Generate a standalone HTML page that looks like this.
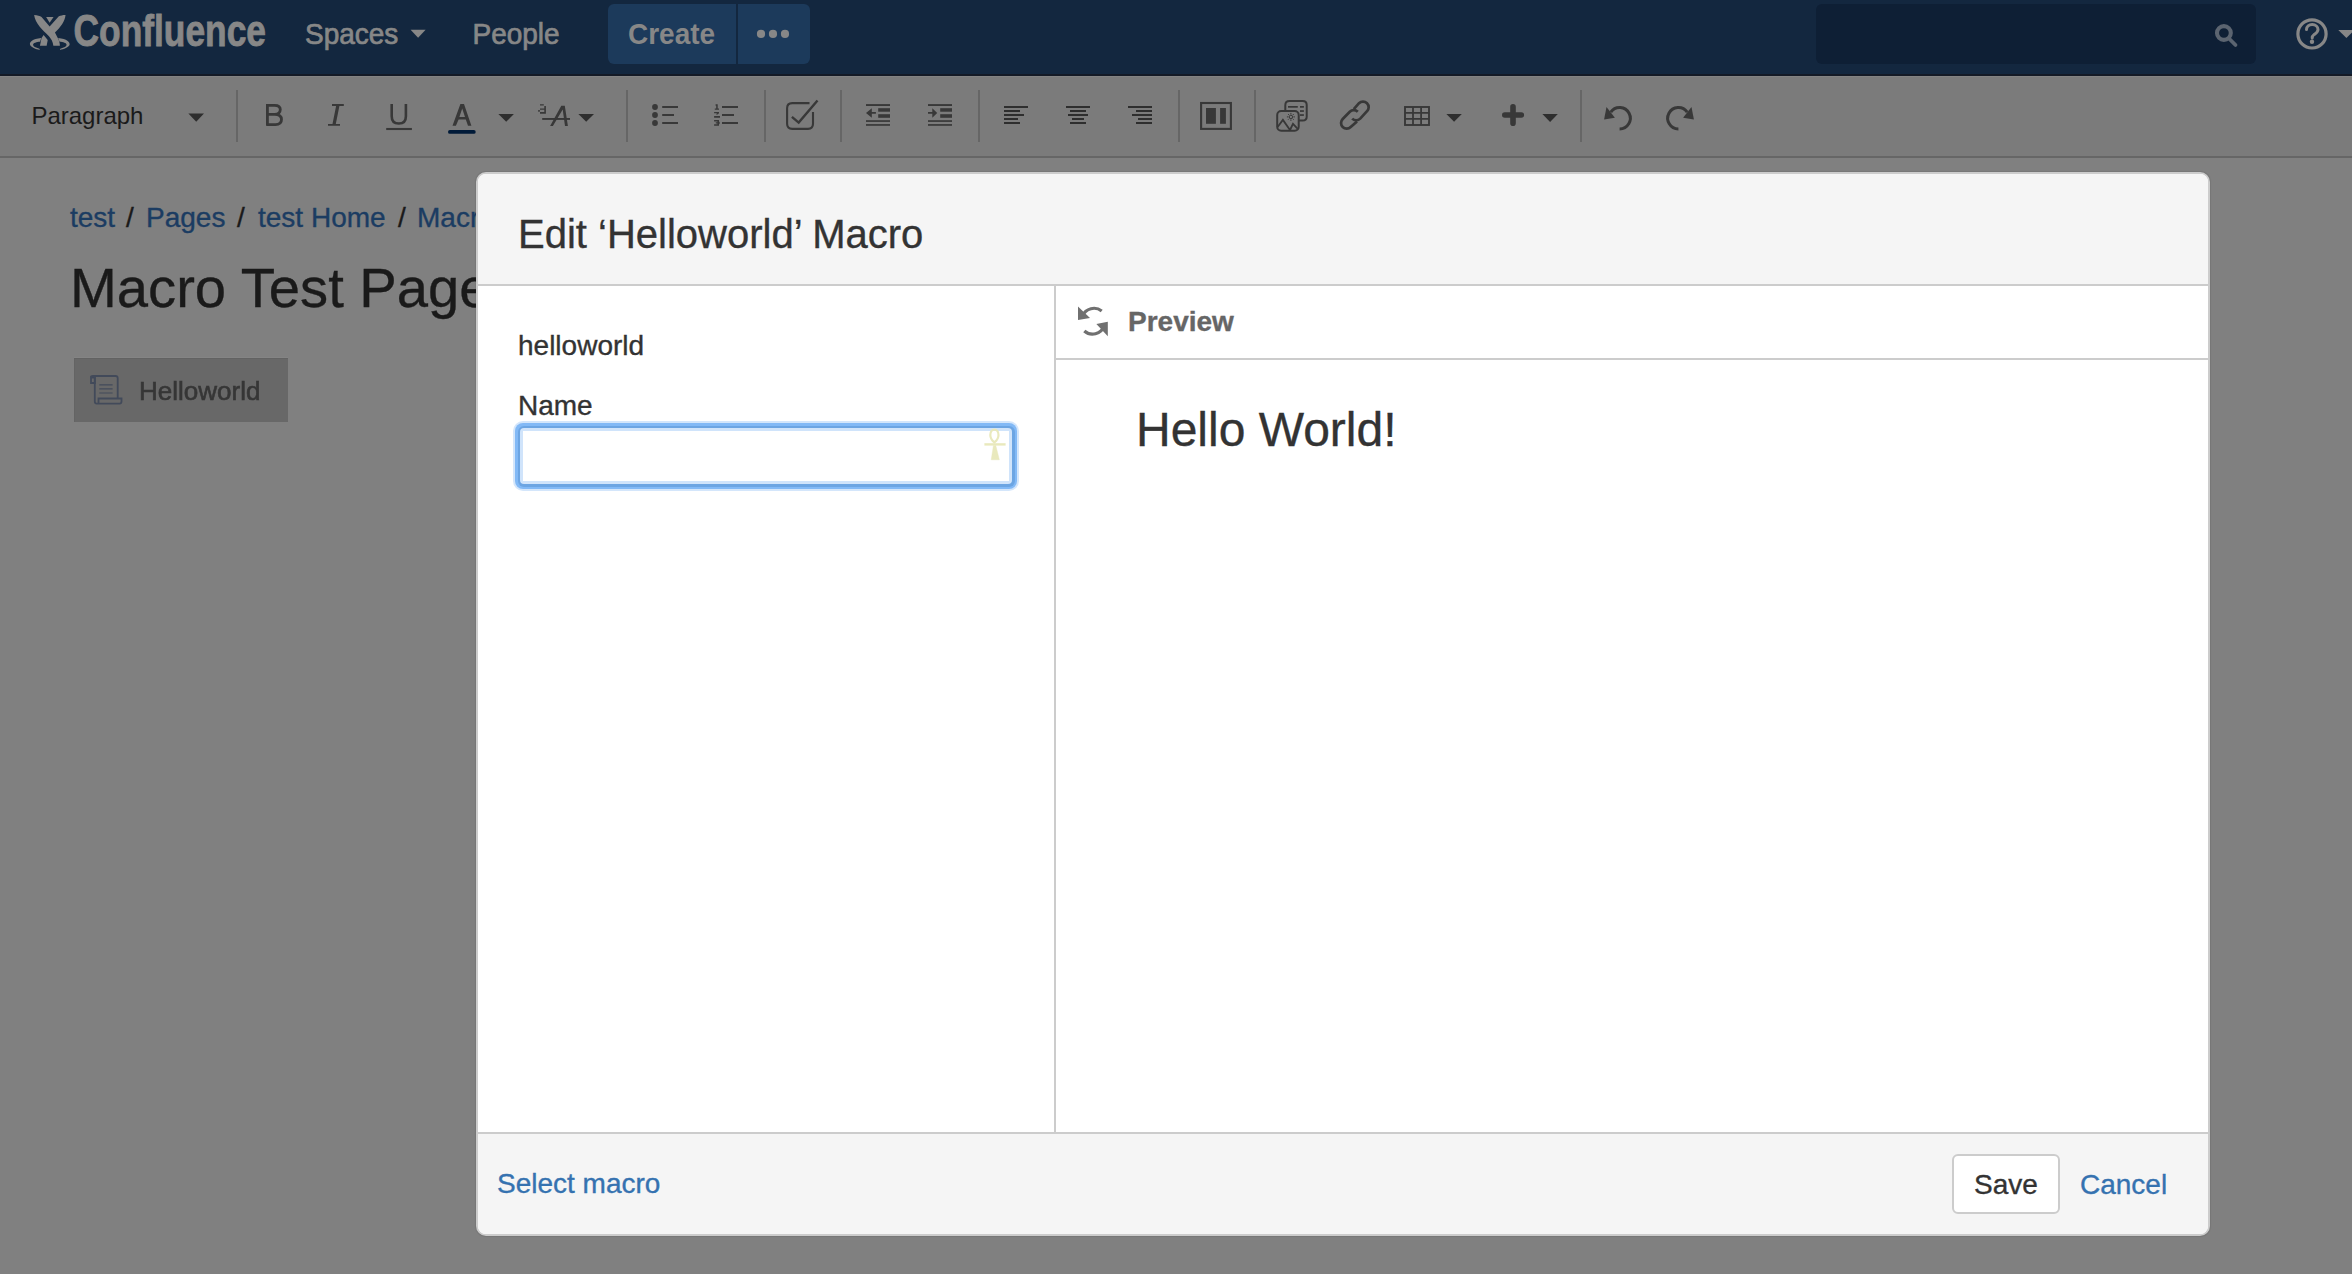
<!DOCTYPE html>
<html><head><meta charset="utf-8">
<style>
html,body{margin:0;padding:0}
body{width:2352px;height:1274px;overflow:hidden;position:relative;background:#808080;font-family:"Liberation Sans",sans-serif}
.a{position:absolute;white-space:nowrap;line-height:1;-webkit-text-stroke:0.35px}
#nav{position:absolute;left:0;top:0;width:2352px;height:74px;background:#13273f}
#navline{position:absolute;left:0;top:74px;width:2352px;height:2px;background:#141a26}
#tb{position:absolute;left:0;top:76px;width:2352px;height:80px;background:#7b7b7b;box-shadow:inset 0 1px 0 #838383}
#tbline{position:absolute;left:0;top:156px;width:2352px;height:2px;background:#666}
.sep{position:absolute;top:90px;width:2px;height:52px;background:#666}
.ic{position:absolute}
/* dialog */
#dlg{position:absolute;left:476px;top:172px;width:1730px;height:1060px;border:2px solid #cccccc;border-radius:10px;background:#fff;overflow:hidden;box-shadow:0 0 1px 1px rgba(0,0,0,.08)}
#dhead{position:absolute;left:0;top:0;width:1730px;height:110px;background:#f5f5f5;border-bottom:2px solid #cccccc}
#dfoot{position:absolute;left:0;top:958px;width:1730px;height:102px;background:#f5f5f5;border-top:2px solid #cccccc}
#dvdiv{position:absolute;left:576px;top:112px;width:2px;height:846px;background:#cccccc}
#phead{position:absolute;left:578px;top:184px;width:1152px;height:2px;background:#cccccc}
</style></head>
<body>
<div id="nav"></div>
<div id="navline"></div>
<div id="tb"></div>
<div id="tbline"></div>

<svg style="position:absolute;left:0;top:0" width="2352" height="160" viewBox="0 0 2352 160">
 <!-- logo icon -->
 <g transform="translate(26,10) scale(0.035311)" fill="#878787">
  <path d="M230,140 C320,150 400,165 440,200 L670,470 L930,180 C990,150 1060,135 1120,140 C1100,330 980,480 820,640 L900,790 C935,860 960,930 960,1010 L775,1010 C760,900 720,820 650,740 C470,560 260,380 230,140 Z"/>
  <path d="M570,200 L780,200 L670,360 Z"/>
  <path d="M395,1010 L585,1010 C600,930 610,880 615,850 L500,710 L440,790 Z"/>
  <path d="M430,790 C180,820 90,900 115,985 C140,1060 280,1110 390,1130 L380,1095 C270,1065 200,1030 200,985 C200,935 300,905 400,900 Z"/>
  <path d="M910,790 C1160,820 1250,900 1235,985 C1210,1060 1070,1110 960,1130 L970,1095 C1080,1065 1150,1030 1150,985 C1150,935 1050,905 950,900 Z"/>
 </g>
 <text x="73.6" y="46.4" font-family="Liberation Sans" font-weight="bold" font-size="44.7" textLength="192.4" lengthAdjust="spacingAndGlyphs" fill="#878787" stroke="#878787" stroke-width="0.9">Confluence</text>
 <g transform="translate(0,44.5) scale(1,1.06) translate(0,-44.5)"><text x="305" y="44.5" font-family="Liberation Sans" font-size="28" fill="#878787" stroke="#878787" stroke-width="0.7">Spaces</text><text x="472.5" y="44.5" font-family="Liberation Sans" font-size="28" fill="#878787" stroke="#878787" stroke-width="0.7">People</text></g>
 <path d="M410.6,29.7 L425.6,29.7 L418.1,37.7 Z" fill="#878787"/>
 
 <!-- create button -->
 <rect x="608" y="4" width="202" height="60" rx="6" fill="#1c3a5b"/>
 <rect x="736" y="4" width="2" height="60" fill="#13273f"/>
 <g transform="translate(0,44.5) scale(1,1.05) translate(0,-44.5)"><text x="628" y="44.5" font-family="Liberation Sans" font-weight="bold" font-size="28" fill="#878787">Create</text></g>
 <circle cx="761" cy="33.9" r="4.1" fill="#878787"/>
 <circle cx="773" cy="33.9" r="4.1" fill="#878787"/>
 <circle cx="785" cy="33.9" r="4.1" fill="#878787"/>
 <!-- search -->
 <rect x="1816" y="4" width="440" height="60" rx="6" fill="#0e1f35"/>
 <circle cx="2223.9" cy="33" r="6.9" fill="none" stroke="#5b6470" stroke-width="4.1"/>
 <path d="M2229.5,39 L2235.5,45" stroke="#5b6470" stroke-width="3.8" stroke-linecap="round"/>
 <!-- help -->
 <circle cx="2312" cy="33.9" r="14.1" fill="none" stroke="#878787" stroke-width="3.2"/>
 <path d="M2306.5,29.6 C2306.5,26.5 2309,24.6 2312.2,24.6 C2315.6,24.6 2318,26.8 2318,29.6 C2318,32.4 2315.8,33.4 2314,34.6 C2312.6,35.6 2312.2,36.4 2312.2,38" fill="none" stroke="#878787" stroke-width="3" stroke-linecap="round"/>
 <circle cx="2312" cy="41.8" r="2.2" fill="#878787"/>
 <path d="M2338.3,30 L2354.5,30 L2346.4,38 Z" fill="#878787"/>
</svg>



<svg style="position:absolute;left:0;top:76px" width="2352" height="82" viewBox="0 76 2352 82">
 <text x="31.4" y="124.4" font-family="Liberation Sans" font-size="24" fill="#1a1a1a">Paragraph</text>
 <path d="M188.4,113.5 L204,113.5 L196.2,121.7 Z" fill="#2e2e2e"/>
 <rect x="236" y="90" width="2" height="52" fill="#666"/><rect x="626" y="90" width="2" height="52" fill="#666"/><rect x="764" y="90" width="2" height="52" fill="#666"/><rect x="840" y="90" width="2" height="52" fill="#666"/><rect x="978" y="90" width="2" height="52" fill="#666"/><rect x="1178" y="90" width="2" height="52" fill="#666"/><rect x="1254" y="90" width="2" height="52" fill="#666"/><rect x="1580" y="90" width="2" height="52" fill="#666"/>
 <g fill="none" stroke="#383838">
  <!-- B -->
  <path d="M267.4,125 V105.3 H274.6 C278.6,105.3 280.3,107.4 280.3,109.6 C280.3,112.2 278.4,114.4 274.8,114.4 H267.4 M274.8,114.4 C279.6,114.4 281.5,116.9 281.5,119.6 C281.5,122.4 279.5,124.6 275.4,124.6 H266.2" stroke-width="2.8"/>
  <!-- U -->
  <path d="M391.7,103.9 V116.2 C391.7,121.6 394.4,123.5 398.8,123.5 C403.2,123.5 405.9,121.6 405.9,116.2 V103.9" stroke-width="2.6"/>
  <path d="M386.2,129 H411.9" stroke-width="2.1"/>
  <!-- A -->
  <path d="M452.5,125.8 L460.4,104 H464 L471.4,125.8 H468 L465.8,119.4 H458.6 L455.9,125.8 Z M459.4,117 H465 L462.2,108.6 Z" fill="#383838" stroke="none" fill-rule="evenodd"/>
  
  <!-- check box -->
  <path d="M809.5,103.1 H792.2 C789,103.1 787.1,105.2 787.1,108.2 V123.8 C787.1,127 789,128.9 792.2,128.9 H808 C811.1,128.9 813,127 813,123.8 V112" stroke-width="2.1"/>
  <path d="M791.9,116.9 L798.7,122.6 L817.5,100.5" stroke-width="2.4"/>
  <!-- layout -->
  <rect x="1201.1" y="103" width="29.8" height="25.9" stroke-width="2.1"/>
  <!-- image -->
  <path d="M1285.3,110 V105.2 C1285.3,102.3 1286.6,101 1289.5,101 H1302.7 C1305.5,101 1306.7,102.3 1306.7,105 V116.8 C1306.7,119.6 1305.5,120.6 1302.7,120.6 H1298.7" stroke-width="2"/>
  <rect x="1277.2" y="111" width="21.5" height="19.7" rx="4" stroke-width="2"/>
  <path d="M1277.6,127 L1282.9,119.9 L1290,130 M1290,130 L1293,123.8 L1298.2,129.3" stroke-width="1.8"/>
  <!-- link -->
  <path d="M1353.8,109.1 L1359,103.2 A5.6,5.6 0 0 1 1367,111.2 L1360.2,118.6 A5.6,5.6 0 0 1 1352.2,118.6" stroke-width="2.7"/>
  <path d="M1357,121.4 L1350.7,127 A5.6,5.6 0 0 1 1342.7,119 L1349.8,111.8 A5.6,5.6 0 0 1 1357.8,111.8" stroke-width="2.7"/>
  <!-- table -->
  <rect x="1405" y="107" width="24" height="18" stroke-width="1.9"/>
  <path d="M1413,107 V125 M1421.1,107 V125 M1405,112.9 H1429 M1405,118.9 H1429" stroke-width="1.8"/>
  <!-- plus -->
  <path d="M1513,106.8 V123.3 M1504.8,115 H1521.3" stroke-width="5.6" stroke-linecap="round"/>
  <!-- undo -->
  <path d="M1619.6,128.9 A10.7,10.7 0 1 0 1610.8,112.1" stroke-width="3"/>
  <path d="M1678.4,128.9 A10.7,10.7 0 1 1 1687.2,112.1" stroke-width="3"/>
 </g>
 <g fill="#383838">
  <!-- I -->
  <path d="M332,104 H343.8 V105.9 H339.4 L335.8,124 H340 V125.8 H328 V124 H332.5 L336.1,105.9 H332 Z"/>
  <rect x="448" y="130" width="27.7" height="3.8" rx="1.9" fill="#001a38"/>
  <path d="M498.4,114 L513.9,114 L506.2,121.7 Z" fill="#2e2e2e"/>
  <!-- aA -->
  <path d="M540,104.2 H543.8 V105.6 H540 Z M544.3,106 H545.9 V113.8 H540 V112.1 H544.3 V109.8 H540 V108.4 H544.3 Z M538.2,110 H539.8 V111.7 H538.2 Z"/>
  <rect x="542.2" y="118" width="27.8" height="1.9"/>
  <path d="M550.1,125.9 L561.3,105.8 L564.8,105.8 L567.9,125.9 L565,125.9 L562.7,109.6 L552.9,125.9 Z"/>
  <path d="M578.4,114 L594,114 L586.2,121.7 Z" fill="#2e2e2e"/>
  <!-- bullets -->
  <circle cx="655" cy="107" r="2.9"/><circle cx="655" cy="115" r="2.9"/><circle cx="655" cy="123" r="2.9"/>
  <rect x="662.2" y="106" width="15.8" height="2"/><rect x="662.2" y="114" width="11.8" height="2"/><rect x="662.2" y="122" width="15.8" height="2"/>
  <!-- numbers -->
  <path d="M715.6,104.2 H717.7 V108.4 H719 V109.8 H714.8 V108.4 H716.2 V105.8 H715.6 Z"/>
  <path d="M714.1,112 H719 V113.2 L717.5,114.6 H716 L717,113.3 H714.1 Z M714.1,116.1 H720 V117.7 H714.1 Z"/>
  <path d="M714.1,120 H719 V121.4 L720,122.9 L719,124.2 V125.7 H714.1 V124.2 H717.4 V123.5 H715.8 V122.3 H717.4 V121.4 H714.1 Z"/>
  <rect x="722" y="106" width="16" height="2"/><rect x="722" y="114" width="12" height="2"/><rect x="722" y="122" width="16" height="2"/>
  <!-- outdent -->
  <rect x="866" y="104.1" width="24" height="1.9"/>
  <rect x="878.2" y="108.2" width="11.8" height="3.5"/>
  <rect x="878.2" y="114.2" width="11.8" height="3.6"/>
  <rect x="866" y="120.2" width="24" height="1.7"/>
  <rect x="866" y="124.1" width="24" height="1.7"/>
  <path d="M866,112.9 L871.8,108.2 V112 H875.9 V113.8 H871.8 V117.8 Z"/>
  <!-- indent -->
  <rect x="928" y="104.1" width="24" height="1.9"/>
  <rect x="940.2" y="108.2" width="11.8" height="3.5"/>
  <rect x="940.2" y="114.2" width="11.8" height="3.6"/>
  <rect x="928" y="120.2" width="24" height="1.7"/>
  <rect x="928" y="124.1" width="24" height="1.7"/>
  <path d="M937.2,112.9 L932.3,108.2 V112 H928 V113.8 H932.3 V117.8 Z"/>
 </g>
 <g fill="#2e2e2e">
  <!-- align left -->
  <rect x="1004" y="106" width="24" height="2"/><rect x="1004" y="110" width="16" height="2"/><rect x="1004" y="114" width="20" height="2"/><rect x="1004" y="118" width="14" height="2"/><rect x="1004" y="122" width="16" height="2"/>
  <!-- align center -->
  <rect x="1066" y="106" width="24" height="2"/><rect x="1070" y="110" width="16" height="2"/><rect x="1068" y="114" width="20" height="2"/><rect x="1072" y="118" width="12" height="2"/><rect x="1070" y="122" width="16" height="2"/>
  <!-- align right -->
  <rect x="1128" y="106" width="24" height="2"/><rect x="1136" y="110" width="16" height="2"/><rect x="1132" y="114" width="20" height="2"/><rect x="1138" y="118" width="14" height="2"/><rect x="1136" y="122" width="16" height="2"/>
 </g>
 <g fill="#383838">
  <rect x="1206" y="108" width="9.9" height="15.8"/><rect x="1220.1" y="108" width="5.8" height="15.8"/>
  <rect x="1288" y="106" width="9.8" height="1.7"/><rect x="1300" y="106" width="3.9" height="1.7"/><rect x="1300" y="110.2" width="3.9" height="1.7"/><rect x="1300" y="114.2" width="3.9" height="1.7"/>
  <circle cx="1290.9" cy="116.9" r="1.7" fill="none" stroke="#383838" stroke-width="1"/>
  <path d="M1290.9,112.9 V114.4 M1290.9,119.4 V120.9 M1286.9,116.9 H1288.4 M1293.4,116.9 H1294.9 M1288.1,114.1 L1289.1,115.1 M1292.7,118.7 L1293.7,119.7 M1293.7,114.1 L1292.7,115.1 M1289.1,118.7 L1288.1,119.7" stroke="#383838" stroke-width="1"/>
  <path d="M1446.4,114 L1461.8,114 L1454.1,121.8 Z" fill="#2e2e2e"/>
  <path d="M1542.4,114 L1557.8,114 L1550.1,122 Z" fill="#2e2e2e"/>
  <path d="M1606.5,107 L1604.1,119.6 L1614.9,117.7 Z"/>
  <path d="M1691.5,107 L1693.9,119.6 L1683.1,117.7 Z"/>
 </g>
</svg>

<!-- page content -->
<div class="a" style="left:70px;top:204px;font-size:28px;color:#1b3c62">test</div>
<div class="a" style="left:126px;top:204px;font-size:28px;color:#1a1a1a">/</div>
<div class="a" style="left:146px;top:204px;font-size:28px;color:#1b3c62">Pages</div>
<div class="a" style="left:237px;top:204px;font-size:28px;color:#1a1a1a">/</div>
<div class="a" style="left:258px;top:204px;font-size:28px;color:#1b3c62">test Home</div>
<div class="a" style="left:398px;top:204px;font-size:28px;color:#1a1a1a">/</div>
<div class="a" style="left:417px;top:204px;font-size:28px;color:#1b3c62">Macro Test Page</div>
<div class="a" style="left:70px;top:260px;font-size:56.2px;color:#1a1a1a">Macro Test Page</div>
<div style="position:absolute;left:74px;top:358px;width:214px;height:64px;background:#686868;box-shadow:inset 0 1px 0 #626262,inset 1px 0 0 #646464,0 -1px 0 #848484"></div>
<svg style="position:absolute;left:0;top:340px;filter:blur(0.5px)" width="300" height="90" viewBox="0 340 300 90">
 <g fill="none" stroke="#424a5a" stroke-width="1.8">
  <path d="M91,377.5 H94.8 V383 H91 Z"/>
  <path d="M91,377.5 C91,376.6 92,376 93,376 H115.5 C116.8,376 117.7,377 117.7,378.3 V398.5"/>
  <path d="M94.8,377 V401.5 C94.8,402.8 95.6,403.6 96.8,403.6 H119.5 C120.8,403.6 121.5,402.6 121.5,401.2 V398.5 H98.5 V403.6"/>
  <path d="M99.3,384.8 H112.6 M99.3,388.9 H112.6 M99.3,393 H112.6" stroke-width="1.2"/>
 </g>
</svg>
<div class="a" style="left:139px;top:378px;font-size:26px;color:#363636;filter:blur(0.6px);-webkit-text-stroke:0.6px">Helloworld</div>

<!-- dialog -->
<div id="dlg">
  <div id="dhead"></div>
  <div id="dvdiv"></div>
  <div id="phead"></div>
  <div id="dfoot"></div>
</div>

<!-- input -->
<div style="position:absolute;left:513px;top:421px;width:506px;height:70px;border-radius:10px;background:#d4e6fb"></div>
<div style="position:absolute;left:515px;top:423px;width:502px;height:66px;border-radius:8px;background:#82b9f6"></div>
<div style="position:absolute;left:517.5px;top:425.5px;width:497px;height:61px;border-radius:6px;background:#6ca5e3"></div>
<div style="position:absolute;left:520px;top:428px;width:492px;height:56px;border-radius:4px;background:#d0e4fb"></div>
<div style="position:absolute;left:523px;top:431px;width:486px;height:50px;background:#fff"></div>
<svg style="position:absolute;left:980px;top:425px" width="30" height="40" viewBox="980 425 30 40">
 <g fill="#e9e9bd" stroke="#e9e9bd">
  <path d="M994.4,442.4 C991.4,440 990.3,437.5 990.3,435 C990.3,431.6 992.2,429.6 994.4,429.6 C996.6,429.6 998.5,431.6 998.5,435 C998.5,437.5 997.4,440 994.4,442.4 Z" fill="none" stroke-width="2.2"/>
  <path d="M984.4,444.4 H1005.6" stroke-width="2.4"/>
  <path d="M993.4,445.5 L991.2,459.8 H999.4 L995.8,445.5 Z" stroke-width="0.4"/>
 </g>
</svg>
<!-- refresh -->
<svg style="position:absolute;left:1070px;top:300px" width="45" height="45" viewBox="1070 300 45 45">
 <g fill="none" stroke="#707070" stroke-width="3.2">
  <path d="M1101.7,311 A12.5,12.5 0 0 0 1082.5,315.8"/>
  <path d="M1084.3,331 A12.5,12.5 0 0 0 1104.2,326"/>
 </g>
 <g fill="#707070">
  <path d="M1078,306.5 L1078,320 L1090,318 Z"/>
  <path d="M1107.8,321.8 L1107.8,336.3 L1096.4,324 Z"/>
 </g>
</svg>

<div class="a" style="left:518px;top:214px;font-size:40px;color:#333">Edit ‘Helloworld’ Macro</div>
<div class="a" style="left:518px;top:332px;font-size:28px;color:#333">helloworld</div>
<div class="a" style="left:518px;top:392px;font-size:28px;color:#333">Name</div>
<div class="a" style="left:1128px;top:308px;font-size:28px;font-weight:bold;color:#666">Preview</div>
<div class="a" style="left:1136px;top:406px;font-size:48px;color:#333">Hello World!</div>
<div class="a" style="left:497px;top:1170px;font-size:28px;color:#3572b0">Select macro</div>
<div style="position:absolute;left:1952px;top:1154px;width:104px;height:56px;border:2px solid #ccc;border-radius:6px;background:#fff"></div>
<div class="a" style="left:1974px;top:1171px;font-size:28px;color:#333">Save</div>
<div class="a" style="left:2080px;top:1171px;font-size:28px;color:#3572b0">Cancel</div>
</body></html>
